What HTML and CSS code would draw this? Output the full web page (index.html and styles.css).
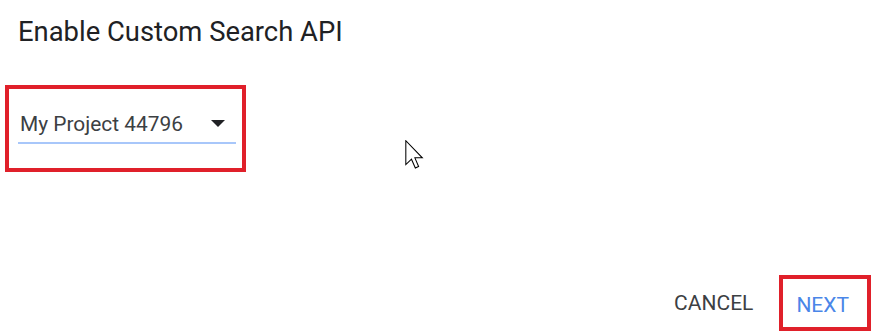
FILE: index.html
```html
<!DOCTYPE html>
<html>
<head>
<meta charset="utf-8">
<link rel="stylesheet" href="styles.css">
</head>
<body>
  <h1 class="title">Enable Custom Search API</h1>
  <div class="highlight highlight-select">
    <div class="select-field">
      <span class="select-value">My Project 44796</span>
      <span class="select-arrow"></span>
    </div>
  </div>
  <div class="footer">
    <button class="btn btn-cancel">CANCEL</button>
    <div class="highlight highlight-next">
      <button class="btn btn-next">NEXT</button>
    </div>
  </div>
  <svg class="cursor" width="20" height="29" viewBox="0 0 12 19.5" xmlns="http://www.w3.org/2000/svg">
    <path d="M0.5 0.5 L0.5 16.5 L4.3 12.9 L6.9 18.8 L9.1 17.8 L6.6 12 L11.6 12 Z" fill="#fff" stroke="#000" stroke-width="0.7" stroke-linejoin="miter"/>
  </svg>
</body>
</html>
```
FILE: styles.css
```css
html, body {
  margin: 0;
  padding: 0;
  background: #ffffff;
}
body {
  position: relative;
  height: 332px;
  display: flex;
  flex-direction: column;
  font-family: Roboto, "Liberation Sans", Arial, sans-serif;
  overflow: hidden;
}
.title {
  margin: 0;
  padding: 16px 0 0 18px;
  font-size: 27.4px;
  line-height: 32px;
  font-weight: 400;
  color: #202124;
}
.highlight {
  border: 4px solid #e0202a;
  box-sizing: border-box;
}
.highlight-select {
  margin: 37px 0 0 5px;
  width: 241px;
  height: 87px;
  padding: 23px 0 0 9px;
}
.select-field {
  width: 218px;
  display: flex;
  align-items: center;
  border-bottom: 2.5px solid #a8c7fa;
  padding: 0 0 6px 2px;
  box-sizing: border-box;
}
.select-value {
  flex: 1;
  font-size: 20.9px;
  line-height: 24px;
  color: #3c4043;
}
.select-arrow {
  width: 0;
  height: 0;
  border-left: 7.5px solid transparent;
  border-right: 7.5px solid transparent;
  border-top: 7.5px solid #202124;
  margin-right: 11px;
  margin-top: -2px;
}
.footer {
  margin-top: auto;
  margin-bottom: 1px;
  display: flex;
  justify-content: flex-end;
  align-items: center;
  padding-right: 5px;
}
.btn {
  background: none;
  border: none;
  margin: 0;
  padding: 0;
  font-family: Roboto, "Liberation Sans", Arial, sans-serif;
  font-size: 21px;
  line-height: 24px;
  font-weight: 400;
  cursor: pointer;
}
.btn-cancel {
  color: #3c4043;
  margin-right: 26px;
}
.highlight-next {
  padding: 14px 18px 10px 13px;
}
.btn-next {
  color: #4a86e8;
  display: block;
}
.cursor {
  position: absolute;
  left: 404px;
  top: 140px;
}
```
